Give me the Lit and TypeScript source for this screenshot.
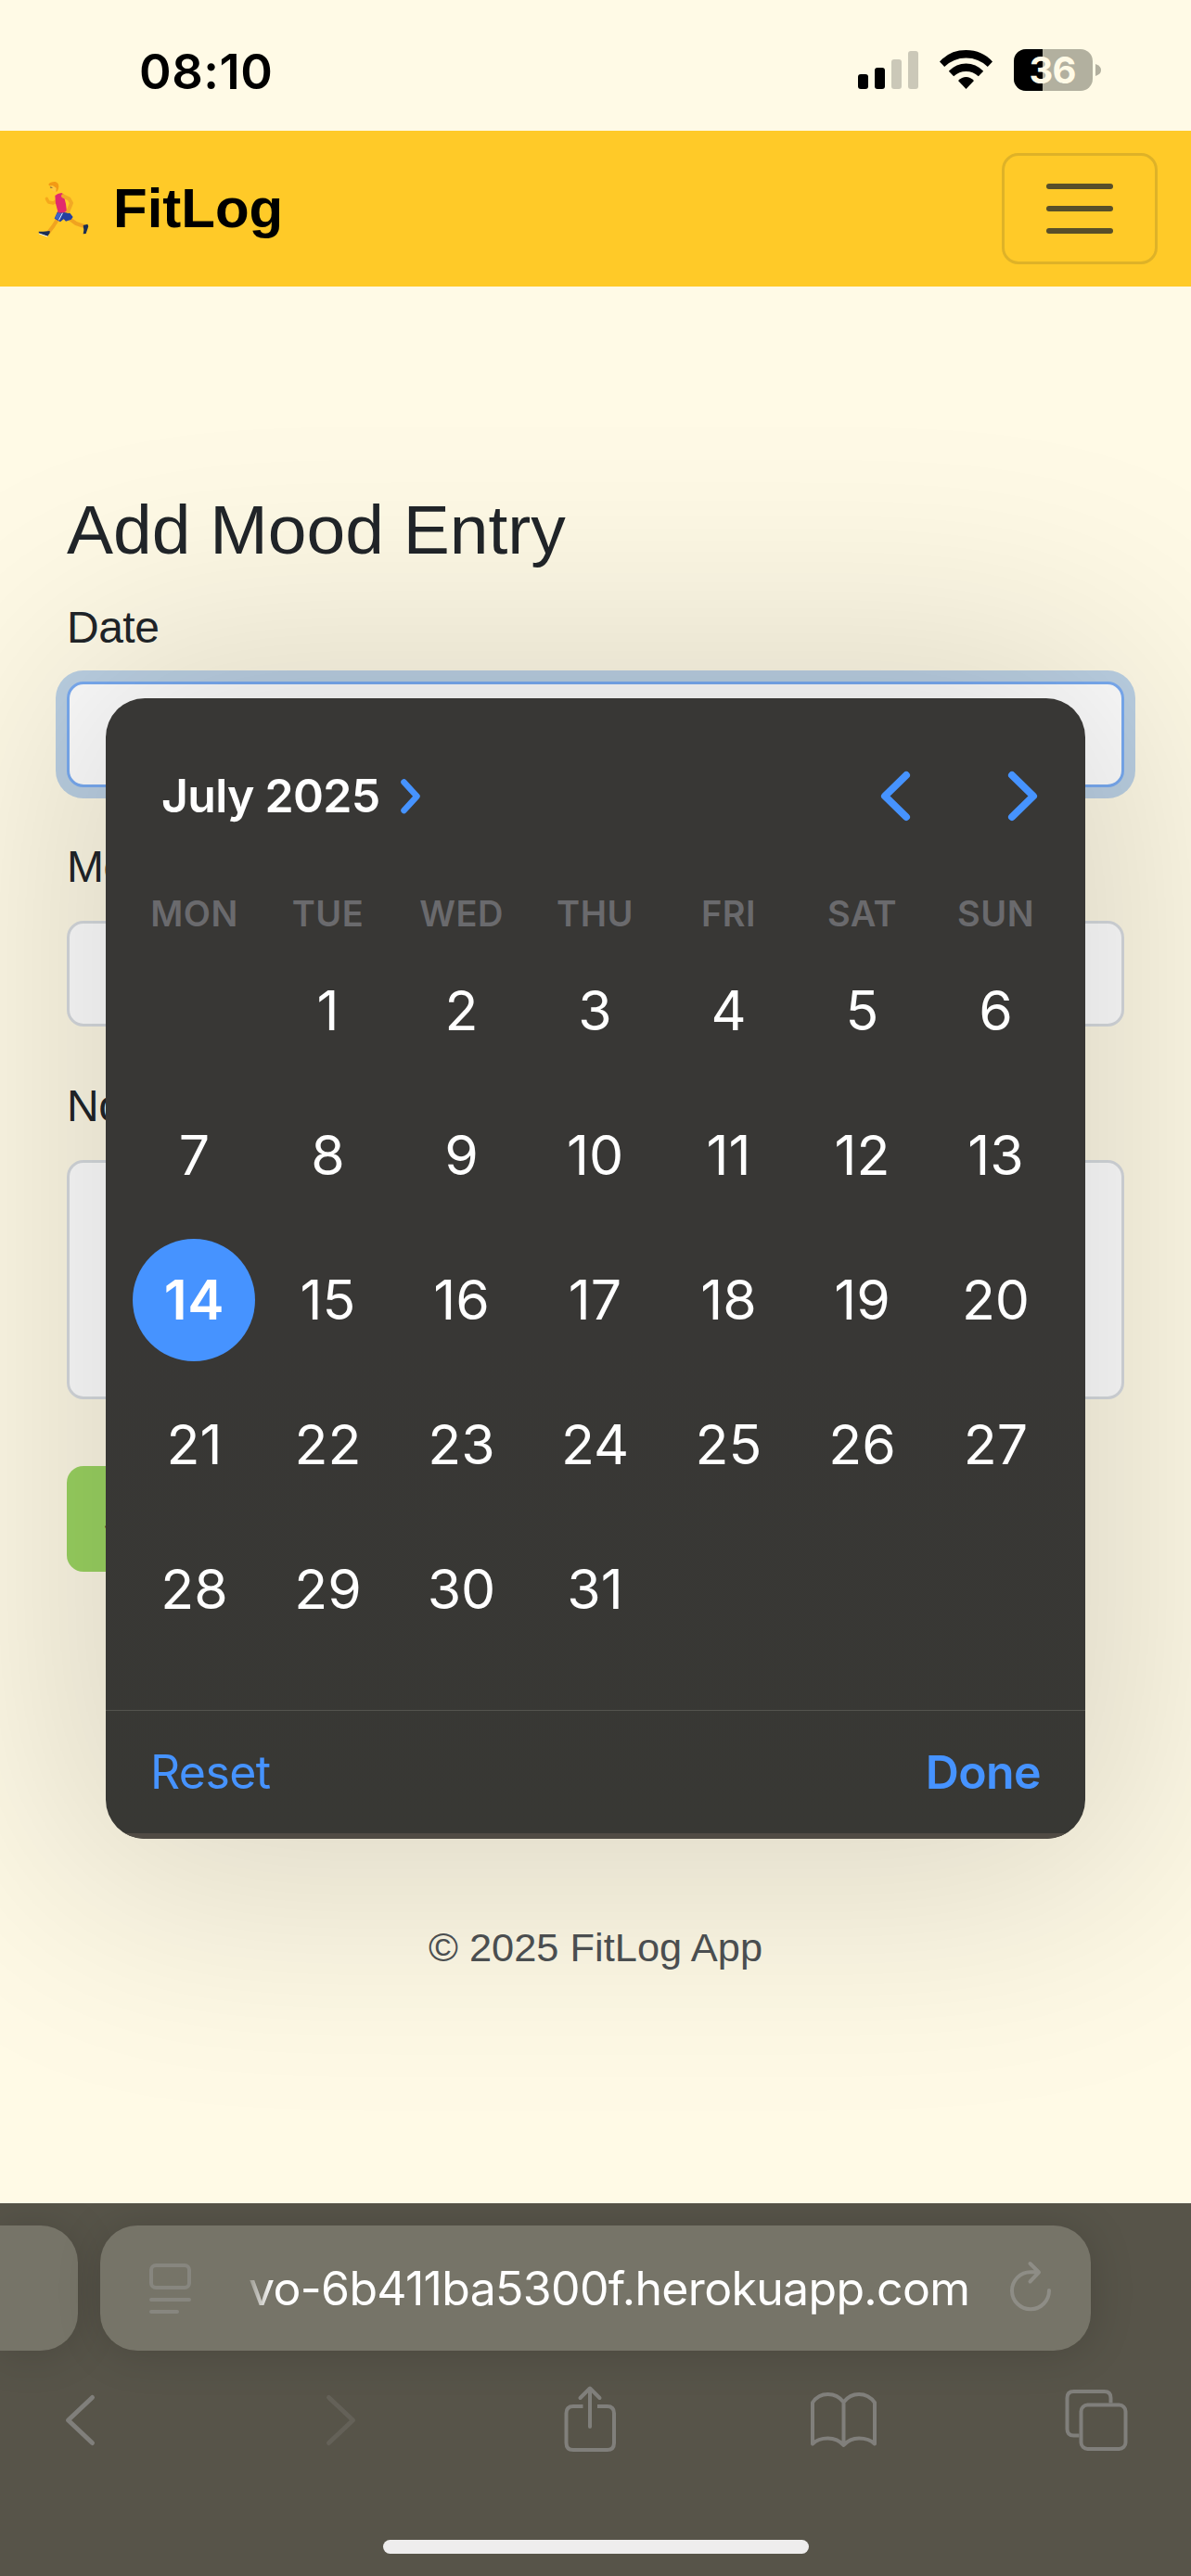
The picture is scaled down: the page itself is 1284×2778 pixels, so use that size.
import { LitElement, html, css } from "lit";
import { customElement } from "lit/decorators.js";
import { classMap } from "lit/directives/class-map.js";

const WEEKDAYS = ["MON", "TUE", "WED", "THU", "FRI", "SAT", "SUN"];
const LEADING_BLANKS = 1;
const DAYS_IN_MONTH = 31;
const SELECTED_DAY = 14;

@customElement("status-bar")
class StatusBar extends LitElement {
  static styles = css`
    :host { display: block; }
    .bar { height: 141px; display: flex; align-items: flex-start; justify-content: space-between; padding: 0 91px 0 150px; box-sizing: border-box; }
    .time { font: 600 52.5px/60px Inter, sans-serif; color: #000; margin-top: 47px; letter-spacing: 0.5px; }
    .icons { width: 270px; height: 50px; margin-top: 50px; display: block; }
    .level { font: 700 40px Inter, sans-serif; }
  `;
  render() {
    return html`<div class="bar">
      <div class="time">08:10</div>
      <svg class="icons" viewBox="923 50 270 50">
        <rect x="925" y="80" width="11" height="16" rx="3"></rect>
        <rect x="943" y="73" width="11" height="23" rx="3"></rect>
        <rect x="961" y="64" width="11" height="32" rx="3" fill="#cbc8b8"></rect>
        <rect x="979" y="55" width="11" height="41" rx="3" fill="#cbc8b8"></rect>
        <path d="M1013 66.5 Q1024 54 1041.500 54 Q1059 54 1070 66.500 L1064.800 72 Q1055 62.500 1041.500 62.500 Q1028 62.500 1018.200 72 Z"></path>
        <path d="M1022.800 76.700 Q1031 68.500 1041.500 68.500 Q1052 68.500 1060.200 76.700 L1054.800 82.200 Q1049 77 1041.500 77 Q1034 77 1028.200 82.200 Z"></path>
        <path d="M1033 87 Q1037 83 1041.500 83 Q1046 83 1050 87 L1041.500 96 Z"></path>
        <clipPath id="cell"><rect x="1093" y="53" width="85" height="45" rx="13"></rect></clipPath>
        <g clip-path="url(#cell)">
          <rect x="1093" y="53" width="85" height="45" fill="#b2b09f"></rect>
          <rect x="1093" y="53" width="31" height="45"></rect>
        </g>
        <path d="M1181 69 Q1187 71 1187 75.500 Q1187 80 1181 82 Z" fill="#b2b09f"></path>
        <text class="level" x="1135" y="90" text-anchor="middle" textLength="51" fill="#fffae6">36</text>
      </svg>
    </div>`;
  }
}

@customElement("site-nav")
class SiteNav extends LitElement {
  static styles = css`
    :host { display: block; }
    .nav { height: 168px; background: #ffca28; display: flex; align-items: center; justify-content: space-between; padding: 0 36px 0 40px; box-sizing: border-box; }
    .brand { display: flex; align-items: center; gap: 25px; font: 700 60px/90px "Liberation Sans", Arial, sans-serif; color: #000; }
    .runner { width: 57px; height: 63px; display: block; }
    .toggle { width: 168px; height: 120px; box-sizing: border-box; border: 3px solid rgba(33, 37, 41, 0.15); border-radius: 18px; display: flex; flex-direction: column; align-items: center; justify-content: center; gap: 18px; }
    .line { width: 72px; height: 6px; border-radius: 3px; background: #584f2a; }
  `;
  render() {
    return html`<div class="nav">
      <div class="brand">
        <svg class="runner" viewBox="60 40 171 189" fill="none" stroke-linecap="round" stroke-linejoin="round">
          <path d="M138 98 L112 115 L97 112 L91 101" stroke="#f5a81c" stroke-width="10"></path>
          <path d="M128 165 L112 190 L98 208" stroke="#f0a320" stroke-width="12"></path>
          <path d="M163 165 L186 181 L212 190" stroke="#f0a320" stroke-width="12"></path>
          <path d="M65 207 L80 207 L101 205 L101 212 L94 222 L66 213 Z" fill="#1d2f52"></path>
          <path d="M209 187 L223 183 L226 190 L218 214 L209 215 L211 202 Z" fill="#1d2f52"></path>
          <path d="M67 214 L93 223" stroke="#e8edf5" stroke-width="3"></path>
          <path d="M126 143 L166 147 L176 160 L170 168 L153 174 L146 167 L135 176 L116 165 Z" fill="#2540a0"></path>
          <path d="M126 146 L144 148 L132 171 L117 164 Z" fill="#3f63c4"></path>
          <path d="M142 148 L131 169" stroke="#dfe6ff" stroke-width="3"></path>
          <path d="M118 91 Q126 84 139 82 L145 86 L153 118 L156 141 Q142 149 128 146 L120 116 Z" fill="#e22a6d"></path>
          <path d="M144 92 L163 101 L171 115 L160 142" stroke="#f2a925" stroke-width="12"></path>
          <ellipse cx="117" cy="62" rx="13" ry="16" fill="#ffc83f"></ellipse>
          <path d="M97 54 Q103 45 119 46 Q133 50 129 68 Q127 78 121 79 L122 66 L111 59 L99 59 Z" fill="#f39a14"></path>
          <path d="M103 64 L108 65" stroke="#725a3c" stroke-width="3"></path>
        </svg>
        <span>FitLog</span>
      </div>
      <div class="toggle"><div class="line"></div><div class="line"></div><div class="line"></div></div>
    </div>`;
  }
}

@customElement("mood-form")
class MoodForm extends LitElement {
  static styles = css`
    :host { display: block; font-family: "Liberation Sans", Arial, sans-serif; color: #212529; }
    .form { padding: 216px 72px 0; display: flex; flex-direction: column; align-items: stretch; }
    .title { font-size: 75px; line-height: 92px; font-weight: 400; margin: 0 0 22px; }
    .label { font-size: 48px; line-height: 75px; margin-bottom: 21px; letter-spacing: -0.5px; }
    .field { height: 114px; box-sizing: border-box; border: 3px solid #d8dce0; border-radius: 18px; background: #fff; margin-bottom: 48px; }
    .focused { border-color: #7aacf3; box-shadow: 0 0 0 12px #bcd1e4; }
    .area { height: 258px; margin-bottom: 72px; }
    .save { align-self: flex-start; height: 114px; box-sizing: border-box; padding: 0 39px; border-radius: 18px; background: #9cd562; font-size: 48px; line-height: 114px; }
    .foot { margin-top: 372px; text-align: center; font-size: 43.4px; line-height: 66px; color: #4e5254; }
  `;
  render() {
    return html`<div class="form">
        <h2 class="title">Add Mood Entry</h2>
        <div class="label">Date</div>
        <div class="field focused"></div>
        <div class="label">Mood</div>
        <div class="field"></div>
        <div class="label">Notes</div>
        <div class="field area"></div>
        <div class="save">Save</div>
      </div>
      <div class="foot">© 2025 FitLog App</div>`;
  }
}

@customElement("date-picker")
class DatePicker extends LitElement {
  static styles = css`
    :host { display: block; font-family: Inter, sans-serif; }
    .panel { width: 1056px; height: 1230px; border-radius: 42px; background: linear-gradient(#383735, #383735 55%, #383834); box-shadow: 0 0 290px 60px rgba(0, 0, 0, 0.14); overflow: hidden; display: flex; flex-direction: column; }
    .head { height: 210px; flex: none; display: flex; align-items: center; padding: 0 50px 0 60px; }
    .month { font-size: 50px; font-weight: 600; color: #fff; margin-right: 20px; white-space: nowrap; letter-spacing: -0.7px; }
    .more { width: 25px; height: 41px; margin-right: auto; }
    .step { width: 35px; height: 57px; }
    .next { margin-left: 102px; }
    .chev { fill: none; stroke: #4693ff; stroke-linecap: round; stroke-linejoin: round; display: block; }
    .days, .names { display: grid; grid-template-columns: repeat(7, 144px); padding: 0 25px 0 23px; text-align: center; }
    .names { font-size: 38px; font-weight: 600; line-height: 45px; height: 45px; color: #6a6a6d; margin-bottom: 4px; letter-spacing: 0.5px; text-indent: 1px; }
    .days { grid-auto-rows: 156px; color: #fff; height: 780px; margin-bottom: 52px; }
    .day { display: flex; align-items: center; justify-content: center; font-size: 59px; font-weight: 400; text-indent: 1px; }
    .selected .disc { background: #4693ff; font-weight: 600; font-size: 59px; letter-spacing: 0.6px; }
    .disc { width: 132px; height: 132px; line-height: 132px; border-radius: 50%; }
    .actions { border-top: 1px solid #54544f; height: 132px; box-sizing: content-box; display: flex; align-items: center; justify-content: space-between; padding: 0 48px; color: #4693ff; font-size: 50px; letter-spacing: -0.6px; }
    .done { font-weight: 600; }
    .edge { height: 6px; background: #504b44; }
  `;
  render() {
    const days = Array.from({ length: DAYS_IN_MONTH }, (_, i) => i + 1);
    return html`<div class="panel">
      <div class="head">
        <div class="month">July 2025</div>
        <svg class="chev more" viewBox="430 837 25 41" stroke-width="6.500"><path d="M435.500 842.500 L449.500 857.700 L435.500 873"></path></svg>
        <svg class="chev step" viewBox="948 829 35 57" stroke-width="8"><path d="M977 835 L954 857.500 L977 880"></path></svg>
        <svg class="chev step next" viewBox="1085 829 35 57" stroke-width="8"><path d="M1091 835 L1114 857.500 L1091 880"></path></svg>
      </div>
      <div class="names">${WEEKDAYS.map((n) => html`<div>${n}</div>`)}</div>
      <div class="days">
        ${Array.from({ length: LEADING_BLANKS }, () => html`<div></div>`)}
        ${days.map((d) => html`<div class=${classMap({ day: true, selected: d === SELECTED_DAY })}><div class="disc">${d}</div></div>`)}
      </div>
      <div class="actions"><span>Reset</span><span class="done">Done</span></div>
      <div class="edge"></div>
    </div>`;
  }
}

@customElement("browser-bar")
class BrowserBar extends LitElement {
  static styles = css`
    :host { display: block; }
    .chrome { height: 402px; box-sizing: border-box; background: #575449; padding-top: 24px; display: flex; flex-direction: column; overflow: hidden; }
    .tabs { display: flex; gap: 24px; height: 135px; flex: none; }
    .tab { background: #767468; box-shadow: 0 3px 48px rgba(0, 0, 0, 0.15); box-sizing: border-box; }
    .prev { width: 84px; border-radius: 0 40px 40px 0; }
    .current { width: 1068px; border-radius: 40px; display: flex; align-items: center; padding: 0 40px 0 50px; }
    .icon { display: block; fill: none; stroke: #87867f; stroke-width: 4; stroke-linecap: round; stroke-linejoin: round; }
    .reader { width: 52px; height: 64px; }
    .reload { width: 52px; height: 64px; margin-left: auto; margin-top: -6px; stroke: #8e8d86; }
    .url { font: 400 50px/80px Inter, sans-serif; color: #fff; white-space: nowrap; margin-left: 58px; width: 780px; letter-spacing: -0.68px; -webkit-mask-image: linear-gradient(90deg, rgba(0,0,0,.25), #000 26px); mask-image: linear-gradient(90deg, rgba(0,0,0,.25), #000 26px); }
    .tools { display: flex; justify-content: space-between; padding: 35px 63px 0 45px; }
    .tool { width: 80px; height: 80px; stroke: #807f7b; }
    .dim { stroke: #646158; }
    .home { width: 459px; height: 15px; border-radius: 8px; background: #eeeded; margin: 89px auto 0; }
  `;
  render() {
    return html`<div class="chrome">
      <div class="tabs">
        <div class="tab prev"></div>
        <div class="tab current">
          <svg class="icon reader" viewBox="158 2436 52 64"><rect x="163" y="2443" width="41" height="24" rx="5"></rect><path d="M163 2480 H204 M163 2493 H191"></path></svg>
          <div class="url">vo-6b411ba5300f.herokuapp.com</div>
          <svg class="icon reload" viewBox="1084 2433 52 64"><path d="M1110.500 2441 L1120 2450.500 L1110.500 2460.500 M1118 2450.300 H1111 A20 20 0 1 0 1131 2470"></path></svg>
        </div>
      </div>
      <div class="tools">
        <svg class="icon tool" viewBox="45 2570 80 80"><path stroke-width="5" d="M99.500 2585.500 L73.500 2610 L99.500 2634.500"></path></svg>
        <svg class="icon tool dim" viewBox="319 2570 80 80"><path stroke-width="5" d="M354.500 2585.500 L380.500 2610 L354.500 2634.500"></path></svg>
        <svg class="icon tool" viewBox="593 2570 80 80"><path stroke-linecap="butt" d="M628.500 2595 H618 Q610.500 2595 610.500 2602.500 V2634.500 Q610.500 2642 618 2642 H654.500 Q662 2642 662 2634.500 V2602.500 Q662 2595 654.500 2595 H644"></path><path d="M636 2617 V2576 M625.500 2586 L636 2575.500 L646.500 2586"></path></svg>
        <svg class="icon tool" viewBox="867 2570 80 80"><path d="M876 2635.500 V2591 Q882 2582 892.500 2582 Q903 2582 909.500 2590.500 Q916 2582 926 2582 Q936.500 2582 943 2591 V2635.500 Q937 2629.500 926 2629.500 Q916 2629.500 909.500 2637 Q903 2629.500 892.500 2629.500 Q882 2629.500 876 2635.500 Z M909.500 2590.500 V2636"></path></svg>
        <svg class="icon tool" viewBox="1141 2570 80 80"><rect x="1165.500" y="2593.500" width="48" height="47.500" rx="7"></rect><path stroke-linecap="butt" d="M1163.500 2626.500 H1157.500 Q1150.500 2626.500 1150.500 2619.500 V2586 Q1150.500 2579 1157.500 2579 H1190.500 Q1197.500 2579 1197.500 2586 V2591.500"></path></svg>
      </div>
      <div class="home"></div>
    </div>`;
  }
}

@customElement("app-root")
class AppRoot extends LitElement {
  static styles = css`
    :host { display: block; }
    .screen { position: relative; width: 1284px; height: 2778px; background: #fffae6; overflow: hidden; display: flex; flex-direction: column; }
    .overlay { position: absolute; left: 114px; top: 753px; }
    .top, .bottom { position: relative; z-index: 2; flex: none; }
    .page { flex: 1; }
  `;
  render() {
    return html`<div class="screen">
      <status-bar class="top"></status-bar>
      <site-nav class="top"></site-nav>
      <mood-form class="page"></mood-form>
      <date-picker class="overlay"></date-picker>
      <browser-bar class="bottom"></browser-bar>
    </div>`;
  }
}
